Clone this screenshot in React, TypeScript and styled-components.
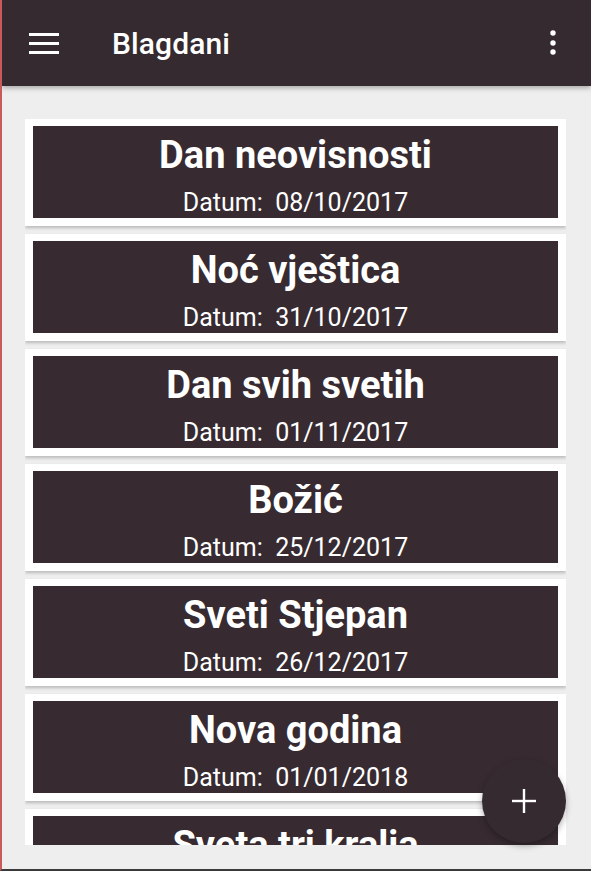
import React from "react";
import styled, { createGlobalStyle } from "styled-components";

const GlobalStyle = createGlobalStyle`
  html, body { margin: 0; padding: 0; background: #eeeeee; }
  body { font-family: Roboto, "Noto Sans", Arial, sans-serif; overflow: hidden; }
  * { box-sizing: border-box; }
`;

const Screen = styled.div`
  position: relative;
  width: 591px;
  height: 871px;
  display: flex;
  flex-direction: column;
  background: #eeeeee;
  border-left: 2px solid #c85a5c;
  border-bottom: 2px solid #3a3a3a;
  overflow: hidden;
`;

const AppBar = styled.header`
  position: relative;
  z-index: 2;
  flex: 0 0 86px;
  height: 86px;
  background: #352a30;
  display: flex;
  align-items: center;
  padding: 0 35px 0 27px;
  box-shadow: 0 2px 5px rgba(0, 0, 0, 0.3);
`;

const IconButton = styled.button`
  border: 0;
  background: none;
  padding: 0;
  display: flex;
  align-items: center;
  justify-content: center;
  cursor: pointer;
`;

const Title = styled.h1`
  margin: 0 0 0 53px;
  flex: 1;
  color: #ffffff;
  font-family: Roboto, sans-serif;
  font-weight: 500;
  font-size: 30px;
  letter-spacing: 0.1px;
`;

const Main = styled.main`
  flex: 1;
  min-height: 0;
  padding: 33px 25px 24px 23px;
  display: flex;
  flex-direction: column;
`;

const List = styled.ul`
  list-style: none;
  margin: 0;
  padding: 0 0 4px 0;
  flex: 1;
  min-height: 0;
  overflow: hidden;
  display: flex;
  flex-direction: column;
  gap: 8px;
`;

const Card = styled.li`
  flex: 0 0 auto;
  background: #ffffff;
  padding: 7px 8px 8px 8px;
  box-shadow: 0 2px 3px rgba(0, 0, 0, 0.22);
`;

const CardInner = styled.div`
  height: 92px;
  background: #372b31;
  display: flex;
  flex-direction: column;
  align-items: center;
  padding-top: 9px;
  color: #ffffff;
`;

const HolidayName = styled.div`
  font-family: Roboto, sans-serif;
  font-weight: 700;
  font-size: 38px;
  line-height: 40px;
  white-space: nowrap;
`;

const HolidayDate = styled.div`
  margin-top: 14px;
  font-family: Roboto, sans-serif;
  font-weight: 400;
  font-size: 25px;
  line-height: 28px;
  white-space: pre;
`;

const Fab = styled.button`
  position: absolute;
  right: 25px;
  bottom: 26px;
  width: 84px;
  height: 84px;
  border-radius: 50%;
  border: 0;
  background: #352a30;
  display: flex;
  align-items: center;
  justify-content: center;
  box-shadow: 0 3px 6px rgba(0, 0, 0, 0.3);
  cursor: pointer;
`;

const holidays = [
  { name: "Dan neovisnosti", date: "08/10/2017" },
  { name: "Noć vještica", date: "31/10/2017" },
  { name: "Dan svih svetih", date: "01/11/2017" },
  { name: "Božić", date: "25/12/2017" },
  { name: "Sveti Stjepan", date: "26/12/2017" },
  { name: "Nova godina", date: "01/01/2018" },
  { name: "Sveta tri kralja", date: "06/01/2018" },
];

export default function App() {
  return (
    <>
      <GlobalStyle />
      <Screen>
        <AppBar>
          <IconButton aria-label="menu">
            <svg width="30" height="22" viewBox="0 0 30 22">
              <rect x="0" y="1" width="30" height="3" fill="#fff" />
              <rect x="0" y="10" width="30" height="3" fill="#fff" />
              <rect x="0" y="19" width="30" height="3" fill="#fff" />
            </svg>
          </IconButton>
          <Title>Blagdani</Title>
          <IconButton aria-label="more">
            <svg width="6" height="26" viewBox="0 0 6 26">
              <circle cx="3" cy="3" r="2.7" fill="#fff" />
              <circle cx="3" cy="13" r="2.7" fill="#fff" />
              <circle cx="3" cy="22" r="2.7" fill="#fff" />
            </svg>
          </IconButton>
        </AppBar>
        <Main>
          <List>
            {holidays.map((h) => (
              <Card key={h.name}>
                <CardInner>
                  <HolidayName>{h.name}</HolidayName>
                  <HolidayDate>{`Datum:  ${h.date}`}</HolidayDate>
                </CardInner>
              </Card>
            ))}
          </List>
        </Main>
        <Fab aria-label="add">
          <svg width="24" height="24" viewBox="0 0 24 24">
            <rect x="10.8" y="0" width="2.4" height="24" fill="#fff" />
            <rect x="0" y="10.8" width="24" height="2.4" fill="#fff" />
          </svg>
        </Fab>
      </Screen>
    </>
  );
}
